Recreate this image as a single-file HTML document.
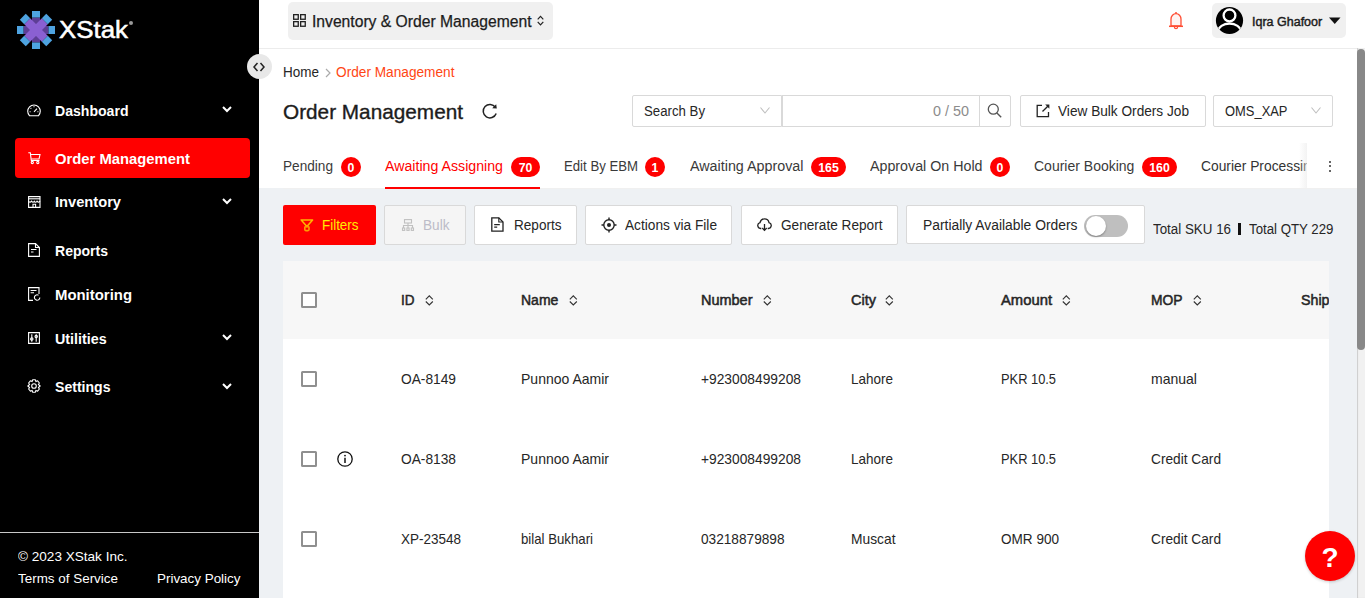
<!DOCTYPE html>
<html><head><meta charset="utf-8">
<style>
*{box-sizing:border-box;margin:0;padding:0}
html,body{width:1365px;height:598px;overflow:hidden;background:#fff;font-family:"Liberation Sans",sans-serif;color:#262626}
.a{position:absolute;white-space:nowrap}
svg.a{overflow:visible}
</style></head><body>

<div class="a" style="left:0px;top:0px;width:259px;height:598px;background:#000"></div>
<div class="a" style="left:259px;top:188px;width:1098px;height:410px;background:#eef1f4"></div>
<div class="a" style="left:259px;top:48px;width:1098px;height:1px;background:#ececec"></div>
<div class="a" style="left:283px;top:188px;width:1074px;height:1px;background:#f0f0f0"></div>
<svg class="a" style="left:17px;top:11px;" width="38" height="38" viewBox="-19 -19 38 38">
<g fill="#5d3e95"><rect x="-4" y="-12.5" width="8" height="25"/><rect x="-12.5" y="-4" width="25" height="8"/></g>
<g fill="#4ea3e0"><rect x="-4" y="-19" width="8" height="6.5"/><rect x="-4" y="12.5" width="8" height="6.5"/><rect x="-19" y="-4" width="6.5" height="8"/><rect x="12.5" y="-4" width="6.5" height="8"/></g>
<g transform="rotate(45)"><rect x="-4.2" y="-12.4" width="8.4" height="24.8" fill="#8a60d2"/><rect x="-12.4" y="-4.2" width="24.8" height="8.4" fill="#8a60d2"/>
<g fill="#4ea3e0"><rect x="-4.2" y="-18.7" width="8.4" height="6.3"/><rect x="-4.2" y="12.4" width="8.4" height="6.3"/><rect x="-18.7" y="-4.2" width="6.3" height="8.4"/><rect x="12.4" y="-4.2" width="6.3" height="8.4"/></g></g>
</svg>
<div id="t0" class="a" style="left:59px;top:15.83px;font-size:23px;line-height:28px;font-weight:400;color:#fff;-webkit-text-stroke:0.5px #fff;transform:scaleX(1.1242);transform-origin:0 0">XStak</div>
<div class="a" style="left:129px;top:21px;width:4px;height:4px;border-radius:2px;background:#9a9a9a"></div>
<div class="a" style="left:15px;top:138px;width:235px;height:40px;background:#f00;border-radius:4px"></div>
<div id="t1" class="a" style="left:55px;top:102.55px;font-size:14.3px;line-height:17px;font-weight:700;color:#fff;;transform:scaleX(0.9841);transform-origin:0 0">Dashboard</div>
<svg class="a" style="left:222px;top:106px;" width="10" height="7" viewBox="0 0 10 7"><path d="M1 1 L5 5 L9 1" fill="none" stroke="#fff" stroke-width="2"/></svg>
<div id="t2" class="a" style="left:55px;top:150.55px;font-size:14.3px;line-height:17px;font-weight:700;color:#fff;;transform:scaleX(1.0361);transform-origin:0 0">Order Management</div>
<div id="t3" class="a" style="left:55px;top:194.15px;font-size:14.3px;line-height:17px;font-weight:700;color:#fff;;transform:scaleX(1.0255);transform-origin:0 0">Inventory</div>
<svg class="a" style="left:222px;top:197.6px;" width="10" height="7" viewBox="0 0 10 7"><path d="M1 1 L5 5 L9 1" fill="none" stroke="#fff" stroke-width="2"/></svg>
<div id="t4" class="a" style="left:55px;top:243.05px;font-size:14.3px;line-height:17px;font-weight:700;color:#fff;;transform:scaleX(0.9809);transform-origin:0 0">Reports</div>
<div id="t5" class="a" style="left:55px;top:287.05px;font-size:14.3px;line-height:17px;font-weight:700;color:#fff;;transform:scaleX(1.0425);transform-origin:0 0">Monitoring</div>
<div id="t6" class="a" style="left:55px;top:330.55px;font-size:14.3px;line-height:17px;font-weight:700;color:#fff;">Utilities</div>
<svg class="a" style="left:222px;top:334px;" width="10" height="7" viewBox="0 0 10 7"><path d="M1 1 L5 5 L9 1" fill="none" stroke="#fff" stroke-width="2"/></svg>
<div id="t7" class="a" style="left:55px;top:379.05px;font-size:14.3px;line-height:17px;font-weight:700;color:#fff;;transform:scaleX(0.9839);transform-origin:0 0">Settings</div>
<svg class="a" style="left:222px;top:382.5px;" width="10" height="7" viewBox="0 0 10 7"><path d="M1 1 L5 5 L9 1" fill="none" stroke="#fff" stroke-width="2"/></svg>
<svg class="a" style="left:27px;top:102.5px;" width="14" height="14" viewBox="0 0 14 14"><path d="M2.6 12.8 A6.3 6.3 0 1 1 11.4 12.8 Z" fill="none" stroke="#fff" stroke-width="1.1" stroke-width="1.2"/><path d="M7 8.8 L10 5.6" fill="none" stroke="#fff" stroke-width="1.1" stroke-width="1.3"/><path d="M7 3.3 V4.3 M3.6 5 L4.3 5.7 M2.6 8.8 H3.6 M10.4 8.8 H11.4" fill="none" stroke="#fff" stroke-width="1.1"/></svg>
<svg class="a" style="left:28px;top:152px;" width="13" height="12" viewBox="0 0 13 12"><path d="M0.3 0.8 H2.3 L3.3 8.5 H11.5" fill="none" stroke="#fff" stroke-width="1.1" stroke-width="1.2"/><path d="M2.8 2.5 H12 L11 7 H3.4" fill="none" stroke="#fff" stroke-width="1.1" stroke-width="1.2"/><circle cx="4.3" cy="10.5" r="1.1" fill="none" stroke="#fff" stroke-width="1.1"/><circle cx="9.8" cy="10.5" r="1.1" fill="none" stroke="#fff" stroke-width="1.1"/></svg>
<svg class="a" style="left:28px;top:196px;" width="13" height="12" viewBox="0 0 13 12"><path d="M0.6 0.6 H12 V11.4 H0.6 Z" fill="none" stroke="#fff" stroke-width="1.1" stroke-width="1.2"/><path d="M0.6 2.8 H12" fill="none" stroke="#fff" stroke-width="1.1" stroke-width="1.6"/><path d="M0.6 5.2 Q2 7.2 3.5 5.2 Q5 7.2 6.3 5.2 Q7.6 7.2 9 5.2 Q10.5 7.2 12 5.2" fill="none" stroke="#fff" stroke-width="1.1"/><path d="M5 11.4 V8.3 H7.6 V11.4" fill="none" stroke="#fff" stroke-width="1.1"/></svg>
<svg class="a" style="left:28px;top:243px;" width="12" height="14" viewBox="0 0 12 14"><path d="M0.6 0.6 H7.5 L11.4 4.5 V13.4 H0.6 Z" fill="none" stroke="#fff" stroke-width="1.1" stroke-width="1.2"/><path d="M7.5 0.6 V4.5 H11.4" fill="none" stroke="#fff" stroke-width="1.1"/><path d="M3 6.5 H8.5 M3 9 H5.5" fill="none" stroke="#fff" stroke-width="1.1" stroke-width="1.2"/></svg>
<svg class="a" style="left:28px;top:287px;" width="13" height="14" viewBox="0 0 13 14"><path d="M5 13.4 H0.6 V0.6 H11 V7" fill="none" stroke="#fff" stroke-width="1.1" stroke-width="1.2"/><path d="M2.6 3.5 H8.5 M2.6 5.8 H6" fill="none" stroke="#fff" stroke-width="1.1" stroke-width="1.2"/><path d="M11.8 10.5 A2.7 2.7 0 1 1 10.5 8.2" fill="none" stroke="#fff" stroke-width="1.1" stroke-width="1.2"/></svg>
<svg class="a" style="left:28px;top:332px;" width="12" height="12" viewBox="0 0 12 12"><path d="M0.6 0.6 H11.4 V11.4 H0.6 Z" fill="none" stroke="#fff" stroke-width="1.1" stroke-width="1.2"/><path d="M3.8 2.2 V9.8 M8.2 2.2 V9.8" fill="none" stroke="#fff" stroke-width="1.1"/><circle cx="3.8" cy="7" r="1.2" fill="none" stroke="#fff" stroke-width="1.1"/><circle cx="8.2" cy="4.6" r="1.2" fill="none" stroke="#fff" stroke-width="1.1"/></svg>
<svg class="a" style="left:27px;top:379px;" width="14" height="14" viewBox="0 0 14 14"><path d="M5.6 0.8 H8.4 L8.9 2.6 L10.6 1.8 L12.4 4 L11.4 5.5 L13.2 7 L11.4 8.5 L12.4 10 L10.6 12.2 L8.9 11.4 L8.4 13.2 H5.6 L5.1 11.4 L3.4 12.2 L1.6 10 L2.6 8.5 L0.8 7 L2.6 5.5 L1.6 4 L3.4 1.8 L5.1 2.6 Z" fill="none" stroke="#fff" stroke-width="1.1" stroke-linejoin="round"/><circle cx="7" cy="7" r="2.3" fill="none" stroke="#fff" stroke-width="1.1"/></svg>
<div class="a" style="left:0px;top:532px;width:259px;height:1px;background:#c8c8c8"></div>
<div id="t8" class="a" style="left:18.3px;top:548.82px;font-size:13.5px;line-height:16px;font-weight:400;color:#fff;;transform:scaleX(1.0044);transform-origin:0 0">© 2023 XStak Inc.</div>
<div id="t9" class="a" style="left:18.3px;top:570.82px;font-size:13.5px;line-height:16px;font-weight:400;color:#fff;;transform:scaleX(0.9947);transform-origin:0 0">Terms of Service</div>
<div id="t10" class="a" style="left:156.8px;top:570.82px;font-size:13.5px;line-height:16px;font-weight:400;color:#fff;;transform:scaleX(0.9937);transform-origin:0 0">Privacy Policy</div>
<div class="a" style="left:288px;top:2px;width:265px;height:38px;background:#f0f0f0;border-radius:5px"></div>
<svg class="a" style="left:293px;top:14px;" width="13" height="13" viewBox="0 0 13 13"><g fill="none" stroke="#222" stroke-width="1.3"><rect x="0.65" y="0.65" width="4.6" height="4.6"/><rect x="7.65" y="0.65" width="4.6" height="4.6"/><rect x="0.65" y="7.65" width="4.6" height="4.6"/><rect x="7.65" y="7.65" width="4.6" height="4.6"/></g></svg>
<div id="t11" class="a" style="left:312px;top:12.03px;font-size:15.8px;line-height:19px;font-weight:400;color:#1c1c1c;-webkit-text-stroke:0.25px #1c1c1c;transform:scaleX(0.9920);transform-origin:0 0">Inventory &amp; Order Management</div>
<svg class="a" style="left:537px;top:15px;" width="7" height="11" viewBox="0 0 7 11"><path d="M0.7 4.3 L3.5 1.3 L6.3 4.3 M0.7 6.9 L3.5 9.9 L6.3 6.9" fill="none" stroke="#222" stroke-width="1.2"/></svg>
<svg class="a" style="left:1168px;top:11px;" width="16" height="20" viewBox="0 0 16 20"><path d="M3 15 V8.2 A5 5.6 0 0 1 13 8.2 V15 Z" fill="#fff4f2" stroke="#ff4d33" stroke-width="1.3"/><path d="M1 15.3 H15" stroke="#ff4d33" stroke-width="1.5"/><path d="M8 1 V2.6" stroke="#ff4d33" stroke-width="1.5"/><path d="M6.4 16 A1.6 1.6 0 0 0 9.6 16" fill="none" stroke="#ff4d33" stroke-width="1.2"/></svg>
<div class="a" style="left:1212px;top:3px;width:134px;height:35px;background:#f0f0f0;border-radius:5px"></div>
<svg class="a" style="left:1215px;top:6px;" width="29" height="29" viewBox="0 0 29 29"><defs><clipPath id="cc"><circle cx="14.5" cy="14.5" r="13.6"/></clipPath></defs><circle cx="14.5" cy="14.5" r="13.6" fill="#000"/><g clip-path="url(#cc)"><circle cx="14.5" cy="9.4" r="5.9" fill="none" stroke="#fff" stroke-width="2.3"/><path d="M3.2 25.5 A11.3 8 0 0 1 25.8 25.5" fill="none" stroke="#fff" stroke-width="2.3"/></g></svg>
<div id="t12" class="a" style="left:1252px;top:14.77px;font-size:12.5px;line-height:15px;font-weight:400;color:#1c1c1c;-webkit-text-stroke:0.45px #1c1c1c">Iqra Ghafoor</div>
<svg class="a" style="left:1329px;top:17px;" width="12" height="8" viewBox="0 0 12 8"><path d="M0 0.5 H11.5 L5.75 7 Z" fill="#111"/></svg>
<div class="a" style="left:246.5px;top:54px;width:25px;height:25px;border-radius:12.5px;background:#e8e8e8"></div>
<svg class="a" style="left:253px;top:62px;" width="12" height="10" viewBox="0 0 12 10"><path d="M4.5 1 L1 5 L4.5 9 M7.5 1 L11 5 L7.5 9" fill="none" stroke="#222" stroke-width="1.5"/></svg>
<div id="t13" class="a" style="left:283px;top:63.72px;font-size:13.8px;line-height:17px;font-weight:400;color:#262626;;transform:scaleX(0.9779);transform-origin:0 0">Home</div>
<svg class="a" style="left:325px;top:68px;" width="6" height="10" viewBox="0 0 6 10"><path d="M1 1 L5 5 L1 9" fill="none" stroke="#aaa" stroke-width="1.2"/></svg>
<div id="t14" class="a" style="left:336px;top:63.72px;font-size:13.8px;line-height:17px;font-weight:400;color:#ff4614;;transform:scaleX(0.9905);transform-origin:0 0">Order Management</div>
<div id="t15" class="a" style="left:283px;top:100.47px;font-size:20.3px;line-height:24px;font-weight:400;color:#1c1c1c;-webkit-text-stroke:0.35px #1c1c1c;transform:scaleX(1.0235);transform-origin:0 0">Order Management</div>
<svg class="a" style="left:482px;top:103px;" width="16" height="16" viewBox="0 0 16 16"><path d="M14.2 10.5 A6.7 6.7 0 1 1 13.4 4.3" fill="none" stroke="#222" stroke-width="1.5"/><path d="M10.2 5.2 L14.8 5.6 L14.2 1.2 Z" fill="#222"/></svg>
<div class="a" style="left:632px;top:95px;width:150px;height:31.5px;background:#fff;border:1px solid #d9d9d9;border-radius:2px 0 0 2px"></div>
<div id="t16" class="a" style="left:644px;top:102.72px;font-size:13.8px;line-height:17px;font-weight:400;color:#262626;;transform:scaleX(0.9583);transform-origin:0 0">Search By</div>
<svg class="a" style="left:760px;top:107px;" width="10" height="7" viewBox="0 0 10 7"><path d="M0.5 0.5 L5 6 L9.5 0.5" fill="none" stroke="#bfbfbf" stroke-width="1.1"/></svg>
<div class="a" style="left:782px;top:95px;width:198px;height:31.5px;background:#fff;border:1px solid #d9d9d9"></div>
<div id="t17" class="a" style="left:933px;top:102.52px;font-size:13.8px;line-height:17px;font-weight:400;color:#8c8c8c;;transform:scaleX(1.0425);transform-origin:0 0">0 / 50</div>
<div class="a" style="left:979px;top:95px;width:32px;height:31.5px;background:#fff;border:1px solid #d9d9d9;border-radius:0 2px 2px 0"></div>
<svg class="a" style="left:986px;top:102px;" width="16" height="16" viewBox="0 0 16 16"><circle cx="7.3" cy="7.2" r="5" fill="none" stroke="#555" stroke-width="1.3"/><path d="M10.9 10.9 L15.2 15.2" stroke="#555" stroke-width="1.4"/></svg>
<div class="a" style="left:1020px;top:95px;width:186px;height:31.5px;background:#fff;border:1px solid #d9d9d9;border-radius:2px"></div>
<svg class="a" style="left:1036px;top:104px;" width="14" height="14" viewBox="0 0 14 14"><path d="M6 1.3 H1.2 V12.6 H12.5 V8" fill="none" stroke="#222" stroke-width="1.3"/><path d="M6.5 7.5 L12.3 1.7" stroke="#222" stroke-width="1.3"/><path d="M9.2 0.6 H13.4 V4.8 Z" fill="#222"/></svg>
<div id="t18" class="a" style="left:1058px;top:102.62px;font-size:13.8px;line-height:17px;font-weight:400;color:#262626;;transform:scaleX(0.9894);transform-origin:0 0">View Bulk Orders Job</div>
<div class="a" style="left:1213px;top:95px;width:120px;height:31.5px;background:#fff;border:1px solid #d9d9d9;border-radius:2px"></div>
<div id="t19" class="a" style="left:1225px;top:102.62px;font-size:13.8px;line-height:17px;font-weight:400;color:#262626;;transform:scaleX(0.9368);transform-origin:0 0">OMS_XAP</div>
<svg class="a" style="left:1311px;top:107px;" width="10" height="7" viewBox="0 0 10 7"><path d="M0.5 0.5 L5 6 L9.5 0.5" fill="none" stroke="#bfbfbf" stroke-width="1.1"/></svg>
<div id="t20" class="a" style="left:283px;top:157.75px;font-size:14px;line-height:17px;font-weight:400;color:#3a3a3a;;transform:scaleX(0.9729);transform-origin:0 0">Pending</div>
<div class="a" style="left:341px;top:157px;width:20px;height:20px;border-radius:10px;background:#f00"></div>
<div id="t21" class="a" style="left:341px;top:161.04px;font-size:12.3px;line-height:15px;font-weight:700;color:#fff;width:20px;text-align:center">0</div>
<div id="t22" class="a" style="left:385px;top:157.75px;font-size:14px;line-height:17px;font-weight:400;color:#f00;;transform:scaleX(1.0130);transform-origin:0 0">Awaiting Assigning</div>
<div class="a" style="left:511px;top:157px;width:29px;height:20px;border-radius:10px;background:#f00"></div>
<div id="t23" class="a" style="left:511px;top:161.04px;font-size:12.3px;line-height:15px;font-weight:700;color:#fff;width:29px;text-align:center">70</div>
<div class="a" style="left:385px;top:187px;width:155px;height:2px;background:#f00"></div>
<div id="t24" class="a" style="left:564px;top:157.75px;font-size:14px;line-height:17px;font-weight:400;color:#3a3a3a;;transform:scaleX(0.9416);transform-origin:0 0">Edit By EBM</div>
<div class="a" style="left:645px;top:157px;width:20px;height:20px;border-radius:10px;background:#f00"></div>
<div id="t25" class="a" style="left:645px;top:161.04px;font-size:12.3px;line-height:15px;font-weight:700;color:#fff;width:20px;text-align:center">1</div>
<div id="t26" class="a" style="left:690px;top:157.75px;font-size:14px;line-height:17px;font-weight:400;color:#3a3a3a;;transform:scaleX(1.0221);transform-origin:0 0">Awaiting Approval</div>
<div class="a" style="left:811px;top:157px;width:35px;height:20px;border-radius:10px;background:#f00"></div>
<div id="t27" class="a" style="left:811px;top:161.04px;font-size:12.3px;line-height:15px;font-weight:700;color:#fff;width:35px;text-align:center">165</div>
<div id="t28" class="a" style="left:870px;top:157.75px;font-size:14px;line-height:17px;font-weight:400;color:#3a3a3a;;transform:scaleX(1.0180);transform-origin:0 0">Approval On Hold</div>
<div class="a" style="left:990px;top:157px;width:20px;height:20px;border-radius:10px;background:#f00"></div>
<div id="t29" class="a" style="left:990px;top:161.04px;font-size:12.3px;line-height:15px;font-weight:700;color:#fff;width:20px;text-align:center">0</div>
<div id="t30" class="a" style="left:1034px;top:157.75px;font-size:14px;line-height:17px;font-weight:400;color:#3a3a3a;">Courier Booking</div>
<div class="a" style="left:1142px;top:157px;width:35px;height:20px;border-radius:10px;background:#f00"></div>
<div id="t31" class="a" style="left:1142px;top:161.04px;font-size:12.3px;line-height:15px;font-weight:700;color:#fff;width:35px;text-align:center">160</div>
<div class="a" style="left:1201px;top:150px;width:106px;height:30px;overflow:hidden">
<div id="t32" class="a" style="left:0px;top:7.75px;font-size:14px;line-height:17px;font-weight:400;color:#333;;transform:scaleX(0.9869);transform-origin:0 0">Courier Processing</div>
</div>
<div class="a" style="left:1299px;top:143px;width:8px;height:45px;background:linear-gradient(to right,rgba(255,255,255,0),rgba(235,235,235,0.6))"></div>
<div class="a" style="left:1307px;top:143px;width:50px;height:45px;background:#fff"></div>
<div class="a" style="left:1328.6px;top:161px;width:2.2px;height:2.2px;border-radius:1.1px;background:#333"></div>
<div class="a" style="left:1328.6px;top:165.3px;width:2.2px;height:2.2px;border-radius:1.1px;background:#333"></div>
<div class="a" style="left:1328.6px;top:169.6px;width:2.2px;height:2.2px;border-radius:1.1px;background:#333"></div>
<div class="a" style="left:283px;top:205px;width:93px;height:40px;background:#f00;border-radius:2px"></div>
<svg class="a" style="left:300px;top:219px;" width="14" height="13" viewBox="0 0 14 13"><path d="M1.2 0.9 H12.6 L6.9 7.6 Z" fill="none" stroke="#ffb800" stroke-width="1.5" stroke-linejoin="round"/><rect x="4.8" y="7.6" width="4.2" height="4" rx="1" fill="none" stroke="#ff9d00" stroke-width="1.6"/></svg>
<div id="t33" class="a" style="left:321.8px;top:216.65px;font-size:14px;line-height:17px;font-weight:400;color:#ffee00;;transform:scaleX(0.9574);transform-origin:0 0">Filters</div>
<div class="a" style="left:384px;top:205px;width:82px;height:40px;background:#f5f5f5;border:1px solid #d9d9d9;border-radius:2px"></div>
<svg class="a" style="left:402px;top:219px;" width="12" height="12" viewBox="0 0 12 12"><g fill="none" stroke="#c0c0c0" stroke-width="1.1"><rect x="2.5" y="0.6" width="7" height="3.4"/><path d="M6 4 V6.5 M1.5 9 V6.5 H10.5 V9 M6 6.5 V9"/><rect x="0.5" y="9" width="2.2" height="2.4"/><rect x="4.9" y="9" width="2.2" height="2.4"/><rect x="9.3" y="9" width="2.2" height="2.4"/></g></svg>
<div id="t34" class="a" style="left:423px;top:216.65px;font-size:14px;line-height:17px;font-weight:400;color:#bcbcc8;;transform:scaleX(0.9730);transform-origin:0 0">Bulk</div>
<div class="a" style="left:474px;top:205px;width:103px;height:40px;background:#fff;border:1px solid #d9d9d9;border-radius:2px"></div>
<svg class="a" style="left:491px;top:217px;" width="13" height="15" viewBox="0 0 13 15"><path d="M0.8 0.8 H7.8 L12 5 V14.2 H0.8 Z" fill="none" stroke="#222" stroke-width="1.3"/><path d="M7.8 0.8 V5 H12" fill="none" stroke="#222" stroke-width="1.1"/><path d="M3.2 7.6 H8.8 M3.2 10.2 H6.2" stroke="#222" stroke-width="1.3"/></svg>
<div id="t35" class="a" style="left:513.5px;top:216.65px;font-size:14px;line-height:17px;font-weight:400;color:#262626;;transform:scaleX(0.9688);transform-origin:0 0">Reports</div>
<div class="a" style="left:585px;top:205px;width:147px;height:40px;background:#fff;border:1px solid #d9d9d9;border-radius:2px"></div>
<svg class="a" style="left:601px;top:217px;" width="16" height="16" viewBox="0 0 16 16"><circle cx="8" cy="8" r="5.2" fill="none" stroke="#222" stroke-width="1.4"/><circle cx="8" cy="8" r="2" fill="#222"/><path d="M8 0.5 V2.8 M8 13.2 V15.5 M0.5 8 H2.8 M13.2 8 H15.5" stroke="#222" stroke-width="1.4"/></svg>
<div id="t36" class="a" style="left:624.5px;top:216.65px;font-size:14px;line-height:17px;font-weight:400;color:#262626;;transform:scaleX(0.9771);transform-origin:0 0">Actions via File</div>
<div class="a" style="left:741px;top:205px;width:157px;height:40px;background:#fff;border:1px solid #d9d9d9;border-radius:2px"></div>
<svg class="a" style="left:757px;top:218px;" width="15" height="13" viewBox="0 0 15 13"><path d="M4.3 10.5 H3.6 A3 3 0 0 1 3 4.6 A4.6 4.6 0 0 1 12 4.6 A3 3 0 0 1 11.4 10.5 H10.7" fill="none" stroke="#222" stroke-width="1.3"/><path d="M7.5 6 V12" stroke="#222" stroke-width="1.3"/><path d="M5.3 10 L7.5 12.4 L9.7 10" fill="none" stroke="#222" stroke-width="1.3"/></svg>
<div id="t37" class="a" style="left:780.5px;top:216.65px;font-size:14px;line-height:17px;font-weight:400;color:#262626;;transform:scaleX(0.9732);transform-origin:0 0">Generate Report</div>
<div class="a" style="left:906px;top:205px;width:239px;height:39px;background:#fff;border:1px solid #d9d9d9;border-radius:2px"></div>
<div id="t38" class="a" style="left:923px;top:216.65px;font-size:14px;line-height:17px;font-weight:400;color:#262626;;transform:scaleX(0.9894);transform-origin:0 0">Partially Available Orders</div>
<div class="a" style="left:1084px;top:215px;width:44px;height:22px;background:#bfbfbf;border-radius:11px"></div>
<div class="a" style="left:1085.5px;top:216px;width:20px;height:20px;border-radius:10px;background:#fff;box-shadow:0 1px 2px rgba(0,0,0,.35)"></div>
<div id="t39" class="a" style="left:1153px;top:221.15px;font-size:14px;line-height:17px;font-weight:400;color:#262626;;transform:scaleX(0.9545);transform-origin:0 0">Total SKU 16</div>
<div class="a" style="left:1238px;top:223px;width:3px;height:11.5px;background:#111"></div>
<div id="t40" class="a" style="left:1249px;top:221.15px;font-size:14px;line-height:17px;font-weight:400;color:#262626;;transform:scaleX(0.9468);transform-origin:0 0">Total QTY 229</div>
<div class="a" style="left:283px;top:261px;width:1046px;height:78px;background:#f7f7f7"></div>
<div class="a" style="left:283px;top:339px;width:1046px;height:259px;background:#fff"></div>
<div class="a" style="left:301px;top:292px;width:16px;height:16px;border:2px solid #8f8f8f;border-radius:1.5px;background:#fff"></div>
<div id="t41" class="a" style="left:401px;top:291.65px;font-size:14px;line-height:17px;font-weight:400;color:#262626;-webkit-text-stroke:0.5px #262626;transform:scaleX(0.9643);transform-origin:0 0">ID</div>
<svg class="a" style="left:425px;top:295px;" width="9" height="11" viewBox="0 0 9 11"><path d="M0.8 4.3 L4.3 0.8 L7.8 4.3 M0.8 6.5 L4.3 10 L7.8 6.5" fill="none" stroke="#333" stroke-width="1.1"/></svg>
<div id="t42" class="a" style="left:521px;top:291.65px;font-size:14px;line-height:17px;font-weight:400;color:#262626;-webkit-text-stroke:0.5px #262626">Name</div>
<svg class="a" style="left:569px;top:295px;" width="9" height="11" viewBox="0 0 9 11"><path d="M0.8 4.3 L4.3 0.8 L7.8 4.3 M0.8 6.5 L4.3 10 L7.8 6.5" fill="none" stroke="#333" stroke-width="1.1"/></svg>
<div id="t43" class="a" style="left:701px;top:291.65px;font-size:14px;line-height:17px;font-weight:400;color:#262626;-webkit-text-stroke:0.5px #262626;transform:scaleX(1.0342);transform-origin:0 0">Number</div>
<svg class="a" style="left:763px;top:295px;" width="9" height="11" viewBox="0 0 9 11"><path d="M0.8 4.3 L4.3 0.8 L7.8 4.3 M0.8 6.5 L4.3 10 L7.8 6.5" fill="none" stroke="#333" stroke-width="1.1"/></svg>
<div id="t44" class="a" style="left:851px;top:291.65px;font-size:14px;line-height:17px;font-weight:400;color:#262626;-webkit-text-stroke:0.5px #262626;transform:scaleX(1.0363);transform-origin:0 0">City</div>
<svg class="a" style="left:885px;top:295px;" width="9" height="11" viewBox="0 0 9 11"><path d="M0.8 4.3 L4.3 0.8 L7.8 4.3 M0.8 6.5 L4.3 10 L7.8 6.5" fill="none" stroke="#333" stroke-width="1.1"/></svg>
<div id="t45" class="a" style="left:1001px;top:291.65px;font-size:14px;line-height:17px;font-weight:400;color:#262626;-webkit-text-stroke:0.5px #262626;transform:scaleX(1.0570);transform-origin:0 0">Amount</div>
<svg class="a" style="left:1062px;top:295px;" width="9" height="11" viewBox="0 0 9 11"><path d="M0.8 4.3 L4.3 0.8 L7.8 4.3 M0.8 6.5 L4.3 10 L7.8 6.5" fill="none" stroke="#333" stroke-width="1.1"/></svg>
<div id="t46" class="a" style="left:1151px;top:291.65px;font-size:14px;line-height:17px;font-weight:400;color:#262626;-webkit-text-stroke:0.5px #262626;transform:scaleX(0.9878);transform-origin:0 0">MOP</div>
<svg class="a" style="left:1193px;top:295px;" width="9" height="11" viewBox="0 0 9 11"><path d="M0.8 4.3 L4.3 0.8 L7.8 4.3 M0.8 6.5 L4.3 10 L7.8 6.5" fill="none" stroke="#333" stroke-width="1.1"/></svg>
<div class="a" style="left:1301px;top:290px;width:28px;height:20px;overflow:hidden">
<div id="t47" class="a" style="left:0px;top:1.65px;font-size:14px;line-height:17px;font-weight:400;color:#262626;-webkit-text-stroke:0.5px #262626;transform:scaleX(1.0167);transform-origin:0 0">Ship</div>
</div>
<div class="a" style="left:301px;top:371px;width:16px;height:16px;border:2px solid #8f8f8f;border-radius:1.5px;background:#fff"></div>
<div id="t48" class="a" style="left:401px;top:370.58px;font-size:14.2px;line-height:17px;font-weight:400;color:#262626;;transform:scaleX(0.9684);transform-origin:0 0">OA-8149</div>
<div id="t49" class="a" style="left:521px;top:370.58px;font-size:14.2px;line-height:17px;font-weight:400;color:#262626;;transform:scaleX(0.9874);transform-origin:0 0">Punnoo Aamir</div>
<div id="t50" class="a" style="left:701px;top:370.58px;font-size:14.2px;line-height:17px;font-weight:400;color:#262626;;transform:scaleX(0.9710);transform-origin:0 0">+923008499208</div>
<div id="t51" class="a" style="left:851px;top:370.58px;font-size:14.2px;line-height:17px;font-weight:400;color:#262626;;transform:scaleX(0.9505);transform-origin:0 0">Lahore</div>
<div id="t52" class="a" style="left:1001px;top:370.58px;font-size:14.2px;line-height:17px;font-weight:400;color:#262626;;transform:scaleX(0.9056);transform-origin:0 0">PKR 10.5</div>
<div id="t53" class="a" style="left:1151px;top:370.58px;font-size:14.2px;line-height:17px;font-weight:400;color:#262626;;transform:scaleX(0.9883);transform-origin:0 0">manual</div>
<div class="a" style="left:301px;top:451px;width:16px;height:16px;border:2px solid #8f8f8f;border-radius:1.5px;background:#fff"></div>
<svg class="a" style="left:337px;top:451px;" width="16" height="16" viewBox="0 0 16 16"><circle cx="8" cy="8" r="7.2" fill="none" stroke="#111" stroke-width="1.3"/><path d="M8 6.8 V12" stroke="#111" stroke-width="1.5"/><circle cx="8" cy="4.6" r="0.9" fill="#111"/></svg>
<div id="t54" class="a" style="left:401px;top:450.58px;font-size:14.2px;line-height:17px;font-weight:400;color:#262626;;transform:scaleX(0.9684);transform-origin:0 0">OA-8138</div>
<div id="t55" class="a" style="left:521px;top:450.58px;font-size:14.2px;line-height:17px;font-weight:400;color:#262626;;transform:scaleX(0.9874);transform-origin:0 0">Punnoo Aamir</div>
<div id="t56" class="a" style="left:701px;top:450.58px;font-size:14.2px;line-height:17px;font-weight:400;color:#262626;;transform:scaleX(0.9710);transform-origin:0 0">+923008499208</div>
<div id="t57" class="a" style="left:851px;top:450.58px;font-size:14.2px;line-height:17px;font-weight:400;color:#262626;;transform:scaleX(0.9505);transform-origin:0 0">Lahore</div>
<div id="t58" class="a" style="left:1001px;top:450.58px;font-size:14.2px;line-height:17px;font-weight:400;color:#262626;;transform:scaleX(0.9056);transform-origin:0 0">PKR 10.5</div>
<div id="t59" class="a" style="left:1151px;top:450.58px;font-size:14.2px;line-height:17px;font-weight:400;color:#262626;;transform:scaleX(0.9649);transform-origin:0 0">Credit Card</div>
<div class="a" style="left:301px;top:531px;width:16px;height:16px;border:2px solid #8f8f8f;border-radius:1.5px;background:#fff"></div>
<div id="t60" class="a" style="left:401px;top:530.58px;font-size:14.2px;line-height:17px;font-weight:400;color:#262626;;transform:scaleX(0.9507);transform-origin:0 0">XP-23548</div>
<div id="t61" class="a" style="left:521px;top:530.58px;font-size:14.2px;line-height:17px;font-weight:400;color:#262626;;transform:scaleX(0.9315);transform-origin:0 0">bilal Bukhari</div>
<div id="t62" class="a" style="left:701px;top:530.58px;font-size:14.2px;line-height:17px;font-weight:400;color:#262626;;transform:scaleX(0.9620);transform-origin:0 0">03218879898</div>
<div id="t63" class="a" style="left:851px;top:530.58px;font-size:14.2px;line-height:17px;font-weight:400;color:#262626;;transform:scaleX(0.9730);transform-origin:0 0">Muscat</div>
<div id="t64" class="a" style="left:1001px;top:530.58px;font-size:14.2px;line-height:17px;font-weight:400;color:#262626;;transform:scaleX(0.9552);transform-origin:0 0">OMR 900</div>
<div id="t65" class="a" style="left:1151px;top:530.58px;font-size:14.2px;line-height:17px;font-weight:400;color:#262626;;transform:scaleX(0.9649);transform-origin:0 0">Credit Card</div>
<div class="a" style="left:1305px;top:531px;width:50px;height:50px;border-radius:25px;background:#f00;box-shadow:0 1px 3px rgba(0,0,0,.2)"></div>
<div id="t66" class="a" style="left:1305px;top:541.30px;font-size:28px;line-height:34px;font-weight:700;color:#fff;width:50px;text-align:center">?</div>
<div class="a" style="left:1357px;top:48px;width:8px;height:550px;background:#f1f1f1;box-shadow:inset 1px 0 1px rgba(0,0,0,.15)"></div>
<div class="a" style="left:1357px;top:49px;width:8px;height:301px;background:#888;border-radius:4px"></div>
</body></html>
